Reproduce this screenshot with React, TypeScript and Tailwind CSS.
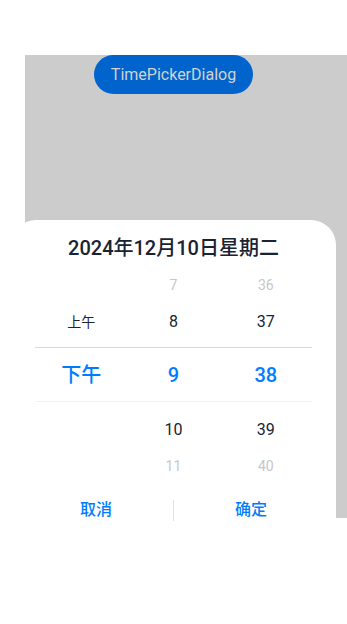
import React from "react";

const font = { fontFamily: '"Roboto", "Noto Sans", "Noto Sans CJK SC", sans-serif' };

function Row({
  h,
  cells,
  cls,
  extra = "",
}: {
  h: string;
  cells: string[];
  cls: string[];
  extra?: string;
}) {
  return (
    <div className={`grid grid-cols-3 ${h} ${extra}`}>
      {cells.map((c, i) => (
        <div key={i} className={`flex items-center justify-center leading-none ${cls[i]}`}>
          {c}
        </div>
      ))}
    </div>
  );
}

export default function App() {
  const faint = "text-[14px] text-[#c4c7cb]";
  const normal = "text-[16px] text-[#182431]";
  const sel = "text-[20px] font-medium text-[#007dff]";
  return (
    <div className="relative w-[347px] h-[624px] bg-white overflow-hidden" style={font}>
      <div className="ml-[25px] mt-[56px] w-[322px] h-[463px] bg-[#cccccc] pt-0">
        <div className="ml-[69px] -mt-[1px] w-[159px] h-[39px] rounded-full bg-[#0064cc] flex items-center justify-center text-[16px] text-[#d2d2d2]">
          TimePickerDialog
        </div>
      </div>

      <div className="absolute left-[11px] top-[220px] w-[325px] h-[330px] bg-white rounded-[25px] pt-[1px]">
        <div className="h-[46px] pt-[8px] flex items-center justify-center text-[20px] font-medium text-[#182431]">
          2024年12月10日星期二
        </div>
        <div className="mx-[24px]">
          <Row h="h-[36px]" cells={["", "7", "36"]} cls={[faint, faint, faint]} />
          <Row h="h-[38px]" cells={["上午", "8", "37"]} cls={["text-[14px] text-[#182431]", normal, normal]} />
          <div className="h-[6px]" />
          <Row
            h="h-[55px]"
            cells={["下午", "9", "38"]}
            cls={[sel, sel, sel]}
            extra="border-t border-t-[#d9d9d9] border-b border-b-[#f3f3f3]"
          />
          <Row h="h-[56px]" cells={["", "10", "39"]} cls={[normal, normal, normal]} />
          <Row h="h-[16px]" cells={["", "11", "40"]} cls={[faint, faint, faint]} />
        </div>
        <div className="mt-[16px] px-[8px] h-[40px] flex items-center">
          <div className="flex-1 flex items-center justify-center text-[16px] font-medium text-[#007dff]">取消</div>
          <div className="w-px h-[21px] bg-[#e3e3e3]" />
          <div className="flex-1 flex items-center justify-center text-[16px] font-medium text-[#007dff]">确定</div>
        </div>
      </div>
    </div>
  );
}
